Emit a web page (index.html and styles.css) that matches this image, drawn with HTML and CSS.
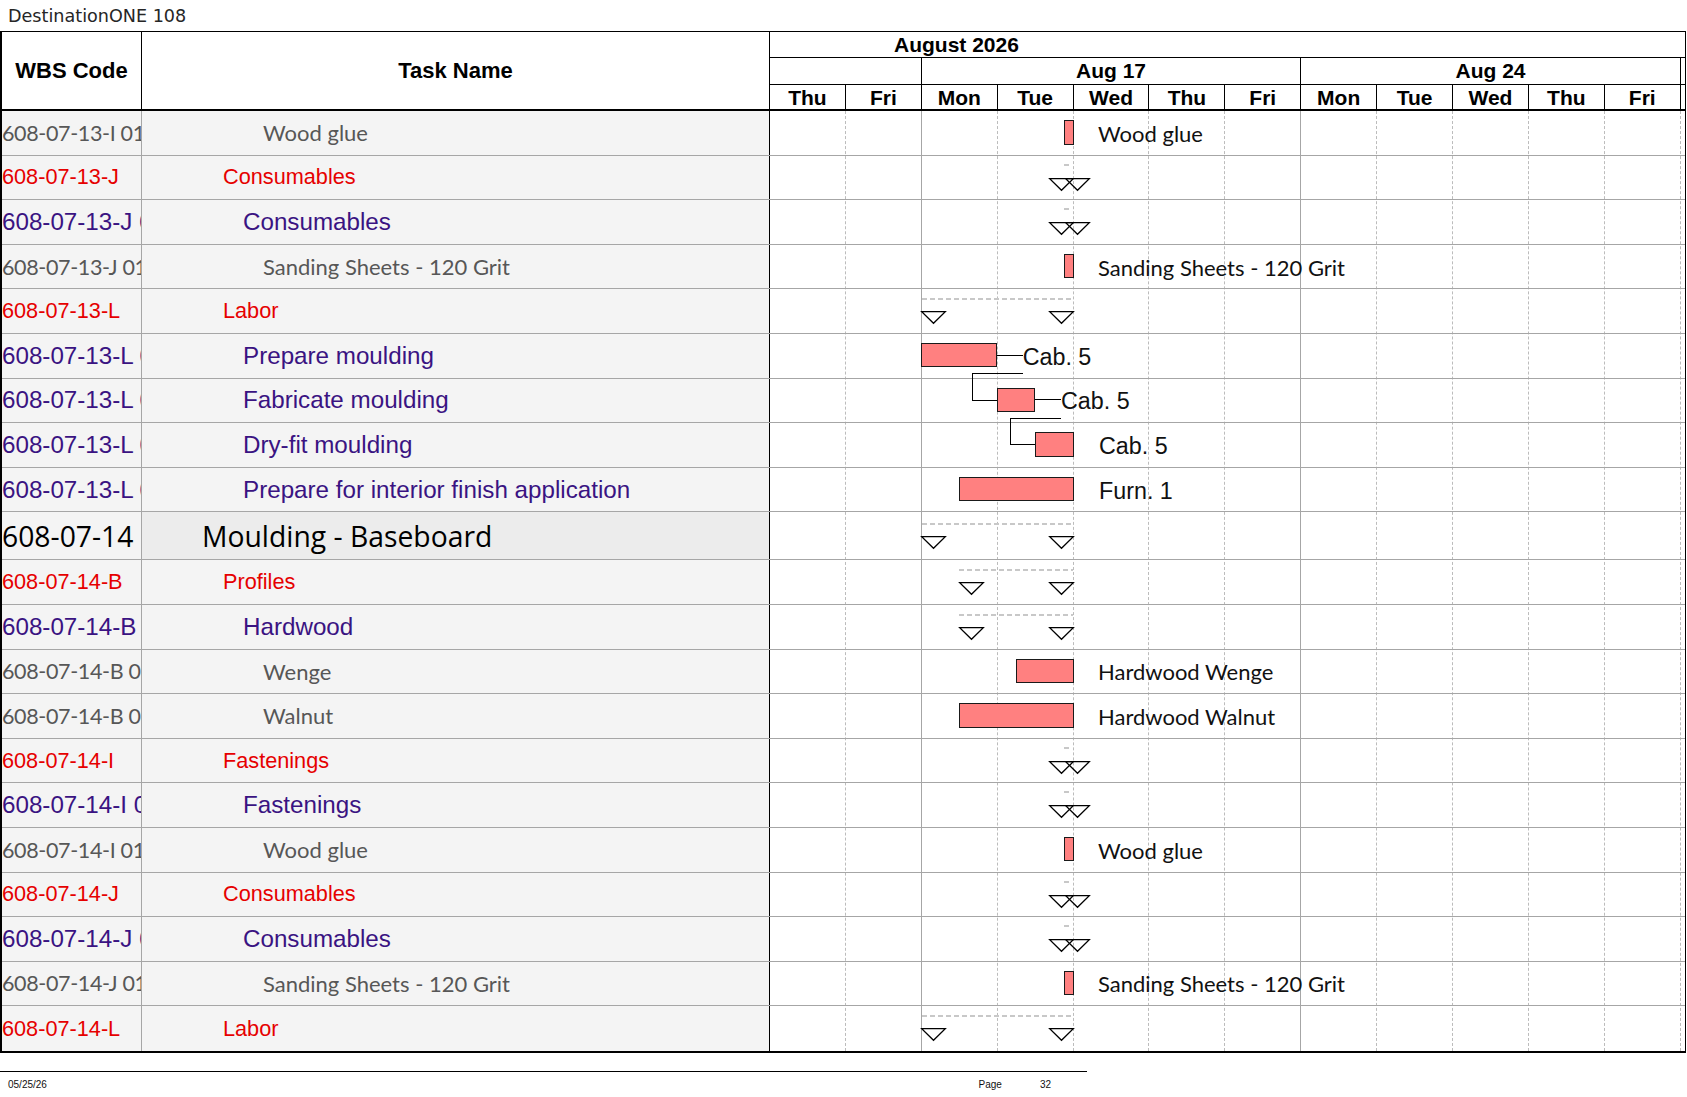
FILE: index.html
```html
<!DOCTYPE html>
<html>
<head>
<meta charset="utf-8">
<link rel="stylesheet" href="styles.css">
</head>
<body>
<div class="title">DestinationONE 108</div>
<div class="sheet">
  <div class="head">
    <div class="hc hc-wbs">WBS Code</div>
    <div class="hc hc-task">Task Name</div>
    <div class="hg">
      <div class="hg-month">August 2026</div>
      <div class="hg-weeks">
        <div class="wk wk-pre"></div>
        <div class="wk">Aug 17</div>
        <div class="wk">Aug 24</div>
      </div>
      <div class="hg-days">
        <div class="d">Thu</div><div class="d">Fri</div><div class="d">Mon</div><div class="d">Tue</div><div class="d">Wed</div><div class="d">Thu</div><div class="d">Fri</div><div class="d">Mon</div><div class="d">Tue</div><div class="d">Wed</div><div class="d">Thu</div><div class="d">Fri</div>
      </div>
    </div>
  </div>
  <div class="body">
    <div class="left">
      <div class="row gray"><div class="wbs">608-07-13-I 01</div><div class="task l3">Wood glue</div></div>
      <div class="row red"><div class="wbs">608-07-13-J</div><div class="task l1">Consumables</div></div>
      <div class="row pur"><div class="wbs">608-07-13-J 01</div><div class="task l2">Consumables</div></div>
      <div class="row gray"><div class="wbs">608-07-13-J 01</div><div class="task l3">Sanding Sheets - 120 Grit</div></div>
      <div class="row red"><div class="wbs">608-07-13-L</div><div class="task l1">Labor</div></div>
      <div class="row pur"><div class="wbs">608-07-13-L 01</div><div class="task l2">Prepare moulding</div></div>
      <div class="row pur"><div class="wbs">608-07-13-L 02</div><div class="task l2">Fabricate moulding</div></div>
      <div class="row pur"><div class="wbs">608-07-13-L 03</div><div class="task l2">Dry-fit moulding</div></div>
      <div class="row pur"><div class="wbs">608-07-13-L 04</div><div class="task l2">Prepare for interior finish application</div></div>
      <div class="row big blk"><div class="wbs">608-07-14</div><div class="task l0">Moulding - Baseboard</div></div>
      <div class="row red"><div class="wbs">608-07-14-B</div><div class="task l1">Profiles</div></div>
      <div class="row pur"><div class="wbs">608-07-14-B 01</div><div class="task l2">Hardwood</div></div>
      <div class="row gray"><div class="wbs">608-07-14-B 01</div><div class="task l3">Wenge</div></div>
      <div class="row gray"><div class="wbs">608-07-14-B 01</div><div class="task l3">Walnut</div></div>
      <div class="row red"><div class="wbs">608-07-14-I</div><div class="task l1">Fastenings</div></div>
      <div class="row pur"><div class="wbs">608-07-14-I 01</div><div class="task l2">Fastenings</div></div>
      <div class="row gray"><div class="wbs">608-07-14-I 01</div><div class="task l3">Wood glue</div></div>
      <div class="row red"><div class="wbs">608-07-14-J</div><div class="task l1">Consumables</div></div>
      <div class="row pur"><div class="wbs">608-07-14-J 01</div><div class="task l2">Consumables</div></div>
      <div class="row gray"><div class="wbs">608-07-14-J 01</div><div class="task l3">Sanding Sheets - 120 Grit</div></div>
      <div class="row red"><div class="wbs">608-07-14-L</div><div class="task l1">Labor</div></div>
    </div>
    <div class="chart">
      <div class="lines">
        <div></div><div class="wkl"></div><div></div><div></div><div></div><div></div><div class="wkl"></div><div></div><div></div><div></div><div></div><div></div>
      </div>
      <!-- 1 -->
      <div class="crow">
        <div class="bar" style="left:293.5px;width:10px"></div>
        <div class="lbl" style="left:328px">Wood glue</div>
      </div>
      <!-- 2 -->
      <div class="crow">
        <div class="sum tiny" style="left:294px;width:7px"></div>
        <svg class="tri pair" style="left:278.6px" viewBox="0 0 25 13"><polygon points="0.7,0.7 24.3,0.7 12.5,12.3"/></svg>
        <svg class="tri pair" style="left:295px" viewBox="0 0 25 13"><polygon points="0.7,0.7 24.3,0.7 12.5,12.3"/></svg>
      </div>
      <!-- 3 -->
      <div class="crow">
        <div class="sum tiny" style="left:294px;width:7px"></div>
        <svg class="tri pair" style="left:278.6px" viewBox="0 0 25 13"><polygon points="0.7,0.7 24.3,0.7 12.5,12.3"/></svg>
        <svg class="tri pair" style="left:295px" viewBox="0 0 25 13"><polygon points="0.7,0.7 24.3,0.7 12.5,12.3"/></svg>
      </div>
      <!-- 4 -->
      <div class="crow">
        <div class="bar" style="left:293.5px;width:10px"></div>
        <div class="lbl" style="left:328px">Sanding Sheets - 120 Grit</div>
      </div>
      <!-- 5 -->
      <div class="crow">
        <div class="sum" style="left:151.5px;width:152px"></div>
        <svg class="tri" style="left:151.3px" viewBox="0 0 25 13"><polygon points="0.7,0.7 24.3,0.7 12.5,12.3"/></svg>
        <svg class="tri" style="left:278.6px" viewBox="0 0 25 13"><polygon points="0.7,0.7 24.3,0.7 12.5,12.3"/></svg>
      </div>
      <!-- 6 -->
      <div class="crow">
        <div class="bar" style="left:151.3px;width:75.9px"></div>
        <div class="conn" style="left:227px;width:26px"></div>
        <div class="lbl ar" style="left:252.7px">Cab. 5</div>
      </div>
      <!-- 7 -->
      <div class="crow">
        <div class="link" style="left:202.3px;top:-5.4px;width:50.4px;height:27.7px"></div>
        <div class="conn" style="left:202.3px;top:22.3px;width:25px"></div>
        <div class="bar" style="left:227.3px;width:38px"></div>
        <div class="conn" style="left:265px;width:26px"></div>
        <div class="lbl ar" style="left:291px">Cab. 5</div>
      </div>
      <!-- 8 -->
      <div class="crow">
        <div class="link" style="left:240.3px;top:-5.3px;width:50.7px;height:27px"></div>
        <div class="conn" style="left:240.3px;top:21.7px;width:25px"></div>
        <div class="bar" style="left:265.3px;width:38.3px"></div>
        <div class="lbl ar" style="left:329px">Cab. 5</div>
      </div>
      <!-- 9 -->
      <div class="crow">
        <div class="bar" style="left:189.3px;width:114.3px"></div>
        <div class="lbl ar" style="left:329px">Furn. 1</div>
      </div>
      <!-- 10 -->
      <div class="crow big">
        <div class="sum" style="left:151.5px;width:152px"></div>
        <svg class="tri" style="left:151.3px" viewBox="0 0 25 13"><polygon points="0.7,0.7 24.3,0.7 12.5,12.3"/></svg>
        <svg class="tri" style="left:278.6px" viewBox="0 0 25 13"><polygon points="0.7,0.7 24.3,0.7 12.5,12.3"/></svg>
      </div>
      <!-- 11 -->
      <div class="crow">
        <div class="sum" style="left:189.3px;width:114px"></div>
        <svg class="tri" style="left:189.3px" viewBox="0 0 25 13"><polygon points="0.7,0.7 24.3,0.7 12.5,12.3"/></svg>
        <svg class="tri" style="left:278.6px" viewBox="0 0 25 13"><polygon points="0.7,0.7 24.3,0.7 12.5,12.3"/></svg>
      </div>
      <!-- 12 -->
      <div class="crow">
        <div class="sum" style="left:189.3px;width:114px"></div>
        <svg class="tri" style="left:189.3px" viewBox="0 0 25 13"><polygon points="0.7,0.7 24.3,0.7 12.5,12.3"/></svg>
        <svg class="tri" style="left:278.6px" viewBox="0 0 25 13"><polygon points="0.7,0.7 24.3,0.7 12.5,12.3"/></svg>
      </div>
      <!-- 13 -->
      <div class="crow">
        <div class="bar" style="left:246.3px;width:57.3px"></div>
        <div class="lbl" style="left:328px">Hardwood Wenge</div>
      </div>
      <!-- 14 -->
      <div class="crow">
        <div class="bar" style="left:189.3px;width:114.3px"></div>
        <div class="lbl" style="left:328px">Hardwood Walnut</div>
      </div>
      <!-- 15 -->
      <div class="crow">
        <div class="sum tiny" style="left:294px;width:7px"></div>
        <svg class="tri pair" style="left:278.6px" viewBox="0 0 25 13"><polygon points="0.7,0.7 24.3,0.7 12.5,12.3"/></svg>
        <svg class="tri pair" style="left:295px" viewBox="0 0 25 13"><polygon points="0.7,0.7 24.3,0.7 12.5,12.3"/></svg>
      </div>
      <!-- 16 -->
      <div class="crow">
        <div class="sum tiny" style="left:294px;width:7px"></div>
        <svg class="tri pair" style="left:278.6px" viewBox="0 0 25 13"><polygon points="0.7,0.7 24.3,0.7 12.5,12.3"/></svg>
        <svg class="tri pair" style="left:295px" viewBox="0 0 25 13"><polygon points="0.7,0.7 24.3,0.7 12.5,12.3"/></svg>
      </div>
      <!-- 17 -->
      <div class="crow">
        <div class="bar" style="left:293.5px;width:10px"></div>
        <div class="lbl" style="left:328px">Wood glue</div>
      </div>
      <!-- 18 -->
      <div class="crow">
        <div class="sum tiny" style="left:294px;width:7px"></div>
        <svg class="tri pair" style="left:278.6px" viewBox="0 0 25 13"><polygon points="0.7,0.7 24.3,0.7 12.5,12.3"/></svg>
        <svg class="tri pair" style="left:295px" viewBox="0 0 25 13"><polygon points="0.7,0.7 24.3,0.7 12.5,12.3"/></svg>
      </div>
      <!-- 19 -->
      <div class="crow">
        <div class="sum tiny" style="left:294px;width:7px"></div>
        <svg class="tri pair" style="left:278.6px" viewBox="0 0 25 13"><polygon points="0.7,0.7 24.3,0.7 12.5,12.3"/></svg>
        <svg class="tri pair" style="left:295px" viewBox="0 0 25 13"><polygon points="0.7,0.7 24.3,0.7 12.5,12.3"/></svg>
      </div>
      <!-- 20 -->
      <div class="crow">
        <div class="bar" style="left:293.5px;width:10px"></div>
        <div class="lbl" style="left:328px">Sanding Sheets - 120 Grit</div>
      </div>
      <!-- 21 -->
      <div class="crow">
        <div class="sum" style="left:151.5px;width:152px"></div>
        <svg class="tri" style="left:151.3px" viewBox="0 0 25 13"><polygon points="0.7,0.7 24.3,0.7 12.5,12.3"/></svg>
        <svg class="tri" style="left:278.6px" viewBox="0 0 25 13"><polygon points="0.7,0.7 24.3,0.7 12.5,12.3"/></svg>
      </div>
    </div>
  </div>
</div>
<div class="footer">
  <span class="fdate">05/25/26</span>
  <span class="fpage">Page</span>
  <span class="fnum">32</span>
</div>
</body>
</html>
```
FILE: styles.css
```css
html, body {
  margin: 0;
  padding: 0;
  background: #ffffff;
}
body {
  font-family: "Liberation Sans", Arial, sans-serif;
  color: #000;
}

.title {
  height: 31px;
  box-sizing: border-box;
  padding: 7px 0 0 8px;
  font-family: "DejaVu Sans", sans-serif;
  font-weight: normal;
  font-size: 17.6px;
  line-height: 18px;
  color: #262626;
}

.sheet {
  width: 1686px;
  box-sizing: border-box;
  border: 1px solid #000;
  border-left-width: 2px;
  border-bottom-width: 2px;
}

/* header */
.head {
  display: flex;
  border-bottom: 2px solid #000;
  background: #fff;
}
.hc {
  display: flex;
  align-items: center;
  justify-content: center;
  box-sizing: border-box;
  border-right: 1px solid #000;
  font-weight: bold;
  font-size: 22px;
  height: 77px;
}
.hc-wbs { width: 140px; }
.hc-task { width: 628px; }
.hg {
  flex: 1;
  display: flex;
  flex-direction: column;
  font-weight: bold;
  font-size: 21px;
}
.hg-month {
  height: 26px;
  box-sizing: border-box;
  border-bottom: 1px solid #000;
  display: flex;
  align-items: center;
  padding-left: 124px;
}
.hg-weeks {
  height: 27px;
  box-sizing: border-box;
  border-bottom: 1px solid #000;
  display: flex;
}
.wk {
  width: 379.5px;
  flex: none;
  box-sizing: border-box;
  border-right: 1px solid #000;
  display: flex;
  align-items: center;
  justify-content: center;
}
.wk-pre { width: 151.8px; }
.hg-days {
  height: 24px;
  display: flex;
}
.d {
  width: 75.9px;
  flex: none;
  box-sizing: border-box;
  border-right: 1px solid #000;
  display: flex;
  align-items: center;
  justify-content: center;
  padding-top: 2px;
}

/* body */
.body {
  display: flex;
}
.left {
  width: 768px;
  flex: none;
}
.row {
  display: flex;
  height: 44.6px;
  box-sizing: border-box;
  border-bottom: 1px solid #a6a6a6;
  background: #f4f4f4;
}
.row.big { height: 48px; }
.row:last-child { border-bottom: none; }
.wbs {
  width: 140px;
  flex: none;
  box-sizing: border-box;
  border-right: 1px solid #a6a6a6;
  display: flex;
  align-items: center;
  overflow: hidden;
  white-space: nowrap;
}
.task {
  width: 628px;
  flex: none;
  box-sizing: border-box;
  border-right: 1px solid #000;
  display: flex;
  align-items: center;
  overflow: hidden;
  white-space: nowrap;
}
.l0 { padding-left: 60px; }
.l1 { padding-left: 81px; }
.l2 { padding-left: 101px; }
.l3 { padding-left: 121px; }
.row.big .task { background: #ececec; }

.gray {
  color: #575757;
  font-family: Lato, "Liberation Sans", sans-serif;
  font-size: 22px;
}
.gray .wbs {
  font-size: 21.5px;
  letter-spacing: -0.35px;
}
.red {
  color: #e60000;
  font-family: "Liberation Sans", Arial, sans-serif;
  font-size: 21.7px;
}
.pur {
  color: #3a1382;
  font-family: "Liberation Sans", Arial, sans-serif;
  font-size: 24.2px;
}
.blk {
  color: #000;
  font-family: "Open Sans", "Liberation Sans", sans-serif;
  font-size: 28.3px;
}

/* chart */
.chart {
  flex: 1;
  position: relative;
  background: #fff;
}
.lines {
  position: absolute;
  top: 0;
  left: 0;
  bottom: 0;
  right: 0;
  display: flex;
}
.lines div {
  width: 75.9px;
  flex: none;
  box-sizing: border-box;
  border-right: 1px dashed #bcbcbc;
}
.lines .wkl {
  border-right: 1px solid #a6a6a6;
}
.crow {
  position: relative;
  height: 44.6px;
  box-sizing: border-box;
  border-bottom: 1px solid #a6a6a6;
}
.crow.big { height: 48px; }
.crow:last-child { border-bottom: none; }

.bar {
  position: absolute;
  top: 50%;
  height: 24.5px;
  margin-top: -12.8px;
  box-sizing: border-box;
  background: #ff8080;
  border: 1.5px solid #1a1a1a;
}
.lbl {
  position: absolute;
  top: 50%;
  transform: translateY(-50%);
  white-space: nowrap;
  font-family: Lato, "Liberation Sans", sans-serif;
  font-size: 22px;
  color: #111;
}
.lbl.ar {
  font-family: "Liberation Sans", Arial, sans-serif;
  font-size: 23.3px;
  transform: translateY(-46%);
}
.conn {
  position: absolute;
  top: 50%;
  height: 1px;
  margin-top: -1px;
  background: #000;
}
.link {
  position: absolute;
  box-sizing: border-box;
  border-top: 1px solid #000;
  border-left: 1px solid #000;
}
.sum {
  position: absolute;
  top: 9px;
  height: 2px;
  background: repeating-linear-gradient(90deg, #c8c8c8 0 5px, transparent 5px 8px);
}
.sum.tiny { top: 8px; }
.crow.big .sum { top: 11px; }
.tri {
  position: absolute;
  top: 22px;
  width: 25px;
  height: 13px;
  overflow: visible;
}
.crow.big .tri { top: 24px; }
.tri polygon {
  fill: #fff;
  stroke: #000;
  stroke-width: 1.3;
  stroke-linejoin: miter;
}
.tri.pair polygon { fill: none; }

/* footer */
.footer {
  width: 1087px;
  margin-top: 18px;
  border-top: 1px solid #000;
  display: flex;
  box-sizing: border-box;
  padding: 7px 36px 0 8px;
  font-family: "Liberation Sans", Arial, sans-serif;
  font-size: 10px;
  line-height: 12px;
  color: #111;
}
.fpage { margin-left: auto; }
.fnum { margin-left: 38px; }
```
